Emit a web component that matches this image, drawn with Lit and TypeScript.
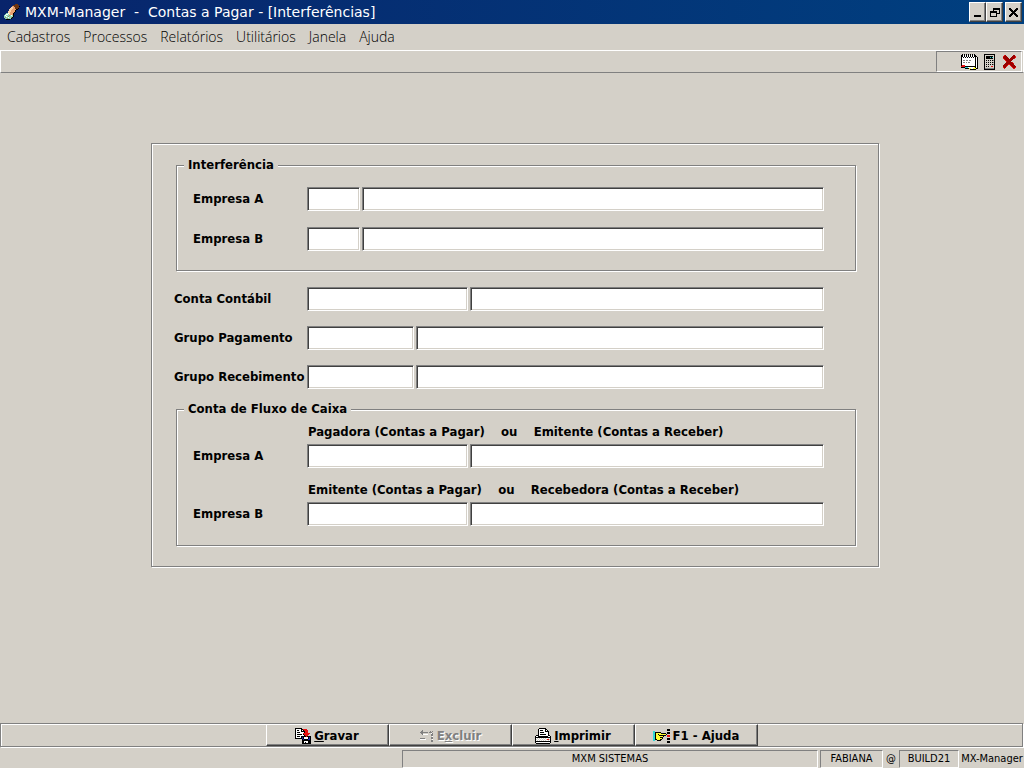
import { LitElement, html, svg, css, nothing } from "lit";
import { customElement, property } from "lit/decorators.js";

const INK: Record<string, string> = {
  k: "#000000", w: "#ffffff", g: "#808080", s: "#d4d0c8", r: "#e81010", d: "#990000",
  y: "#ffff33", c: "#33d6d6", b: "#2020b0", n: "#e8a070", p: "#f8d0a8", m: "#6b3410", t: "#90d8b8", o: "#a09060",
};

const ICONS: Record<string, string[]> = {
  app: [
    "...........mmm..",
    ".........mmmmmm.",
    "........nnmmmmmk",
    ".......ppnnmmmm.",
    "......pppnnmmmk.",
    ".....pppnnnnkk..",
    ".....ppnnnnk....",
    "....pppnnnnk....",
    "....ppnnnnk.....",
    "..ttwpnnnk......",
    ".twwtpnnnk......",
    "twtttotwtk......",
    "ttwtottttk......",
    "tottwttok.......",
    ".ttotttk........",
    "..kkkk..........",
  ],
  notes: [
    ".k.k.k.k.k.k.k...",
    "kkwkwkwkwkwkwkk..",
    "kkwkwkwkwkwkwkkk.",
    "kwkwkwkwkwkwkwkwk",
    "kwwwwwwwwwwwwwkwk",
    "kwwwwwwwwwwwwwkwk",
    "kwggwggwggwwwwkwk",
    "kwwwwwwwwwwwwwkwk",
    "kwggwgwggwwwwwkwk",
    "kwwwwwwwwwwwwwkwk",
    "kwwwwwwwwwwwwwkwk",
    "krrrwwwwwwwwwwkwk",
    "rrrrkkkkkkkkkkkwk",
    "kkkkcccwwwwwwykwk",
    "....kkkkyywwyyykk",
    ".........kkkkkk..",
  ],
  calc: [
    "kkkkkkkkkkk",
    "ksssssssssk",
    "kskkkkkkksk",
    "kskkkkckcsk",
    "kskkkkkkksk",
    "ksssssssssk",
    "kskskskskgk",
    "ksssssssssk",
    "kskskskskgk",
    "ksssssssssk",
    "kskskskskgk",
    "ksssssssssk",
    "kskskssrrsk",
    "ksssssssssk",
    "kgggggggggk",
    "kkkkkkkkkkk",
  ],
  cross: [
    ".rd.......dd.",
    "rddd.....dddr",
    "ddddd...ddddr",
    "rddddd.ddddr.",
    ".rdddddddd...",
    "..rdddddd....",
    "...rdddd.....",
    "...ddddddr...",
    "..ddddddddr..",
    ".ddddrrdddd..",
    "ddddr..rdddd.",
    "dddr....rdddd",
    "rdd......rddr",
    ".r........rr.",
  ],
  save: [
    "kkkkkkk.........",
    "kwwwwwkkrrrr....",
    "kwkkwwkwkrrrr...",
    "kwwwwwkkkkrrr...",
    "kwkkkwwwwkrrr...",
    "kwwwwwwwrrrrrrr.",
    "kwkkkkkwkrrrrr..",
    "kwwwwwwwwkrrr...",
    "kwkkkwkkkkkrkkkk",
    "kwwwwwkbkwwwwkbk",
    "kkkkkkkbkwwwwkbk",
    ".......kbkkkkbbk",
    ".......kkkkkkkkk",
    ".......kkwwwwkkk",
    ".......kkwkwwkkk",
    ".......kkkkkkkkk",
  ],
  remove: [
    "...g...........",
    "..gg.......g.g.",
    ".gggggggg.ggg..",
    "..gg........wg.",
    "...gwwwww...gg.",
    "............gg.",
    ".............w.",
    "............gg.",
    ".ggggg......gg.",
    ".wwwwww......w.",
    "............gg.",
    "............gg.",
  ],
  print: [
    "....kkkkkkk.....",
    "...kwwwwwwkk....",
    "...kwkkkwwkwk...",
    "...kwwwwwwkkkk..",
    "...kwkkkkwwwwk..",
    "...kwwwwwwwwwk..",
    "...kwkkkkkkwwk..",
    ".kkkwwwwwwwwwkk.",
    "kwwkkkkkkkkkkwwk",
    "kkkkkkkkkkkkkkkk",
    "kwswswswswswwswk",
    "kswswswswswsrrsk",
    "kwswswswswswwswk",
    "kkkkkkkkkkkkkkkk",
    "kwwwwwwwwwwwwwwk",
    ".kkkkkkkkkkkkkk.",
  ],
  help: [
    "..............kkk",
    "..............kkk",
    "cc...............",
    "cckkkkkk......kkk",
    "cckyyyyykkkkk.kkk",
    "cckyykyyyyyyyk...",
    "cckyyykkkkkkk.rrr",
    "cckyyyyyyyk...rrr",
    "cckyyyykkk.......",
    "cckyyyyyyk....kkk",
    "cckkyyykk.....kkk",
    "cc..kkkk.........",
    "..............kkk",
    "..............kkk",
  ],
  minimize: [".........", ".........", ".........", ".........", ".........", ".........", ".........", ".kkkkkkk.", ".kkkkkkk."],
  restore: [
    "...kkkkkkk",
    "...kkkkkkk",
    "...k.....k",
    "kkkkkkk..k",
    "kkkkkkk..k",
    "k.....kkkk",
    "k.....k...",
    "k.....k...",
    "kkkkkkk...",
  ],
  close: [
    "kk.....kk",
    "kkk...kkk",
    ".kkk.kkk.",
    "..kkkkk..",
    "...kkk...",
    "..kkkkk..",
    ".kkk.kkk.",
    "kkk...kkk",
    "kk.....kk",
  ],
};

@customElement("pixel-icon")
class PixelIcon extends LitElement {
  @property() name = "";
  static styles = css`
    :host { display: inline-flex; flex: none; }
    svg { display: block; shape-rendering: crispEdges; }
  `;
  render() {
    const rows = ICONS[this.name] ?? [];
    const w = Math.max(...rows.map((r) => r.length));
    const cells = rows.flatMap((row, y) =>
      [...row].map((ch, x) => (ch === "." ? nothing : svg`<rect x=${x} y=${y} width="1" height="1" fill=${INK[ch]}></rect>`)),
    );
    return html`<svg width=${w} height=${rows.length} viewBox="0 0 ${w} ${rows.length}" aria-hidden="true">${cells}</svg>`;
  }
}

@customElement("app-root")
class AppRoot extends LitElement {
  static styles = css`
    :host {
      display: flex;
      flex-direction: column;
      min-height: 100vh;
      box-sizing: border-box;
      background: #d4d0c8;
      color: #000;
      font: 700 13px/16px "DejaVu Sans Condensed", "DejaVu Sans", sans-serif;
    }
    * { box-sizing: border-box; }
    .title {
      display: flex;
      align-items: center;
      height: 24px;
      padding: 0 2px 0 4px;
      gap: 5px;
      background: linear-gradient(90deg, #08246b, #004080);
      color: #fff;
    }
    .title h1 {
      flex: 1;
      margin: 0;
      font: 400 14px/20px "DejaVu Sans", sans-serif;
      white-space: pre;
    }
    .window-buttons { display: flex; }
    .window-buttons button {
      display: flex;
      align-items: center;
      justify-content: center;
      width: 17px;
      height: 20px;
      padding: 0;
      border: 1px solid;
      border-color: #fff #404040 #404040 #fff;
      box-shadow: inset -1px -1px 0 #808080;
      background: #d4d0c8;
    }
    .window-buttons button:last-child { margin-left: 2px; }
    .menu { display: flex; gap: 13px; height: 26px; padding: 0 7px; align-items: center; }
    .menu a { color: #000; text-decoration: none; font: 300 14px/20px "Open Sans", sans-serif; }
    .toolbar {
      display: flex;
      justify-content: flex-end;
      height: 23px;
      padding-right: 1px;
      border: 1px solid;
      border-color: #fff #fff #808080 #fff;
    }
    .tray {
      display: flex;
      align-items: center;
      gap: 6px;
      width: 86px;
      padding: 0 4px 0 24px;
      border: 1px solid;
      border-color: #808080 #fff #fff #808080;
    }
    .tray button { display: flex; padding: 0; border: 0; background: none; }
    .tray button:last-child { margin-left: 2px; }
    main { flex: 1; padding: 70px 145px 70px 151px; }
    .etched { border: 1px solid #808080; box-shadow: 1px 1px 0 #fff, inset 1px 1px 0 #fff; }
    .panel { padding: 14px 0 20px; }
    fieldset { min-width: 0; margin: 0 22px 0 24px; padding: 0 7px 19px; }
    legend { padding: 0 4px; background: #d4d0c8; line-height: 14px; }
    .group { padding: 0 24px 0 9px; display: grid; gap: 16px; }
    .group.companies { padding-top: 15px; }
    .group.flow { padding-top: 6px; gap: 12px; }
    .rows { display: grid; gap: 15px; margin: 16px 54px 13px 22px; }
    .row { display: grid; gap: 2px; align-items: center; }
    .group .row { grid-template-columns: 112px 53px 1fr; }
    .group .row.account { grid-template-columns: 112px 161px 1fr; }
    .rows .row { grid-template-columns: 131px 107px 1fr; }
    .rows .row.account { grid-template-columns: 131px 161px 1fr; }
    .caption { grid-column: 2 / -1; line-height: 20px; white-space: pre; padding-left: 1px; }
    label { white-space: nowrap; }
    input {
      width: 100%;
      min-width: 0;
      height: 24px;
      padding: 0 3px;
      border: 1px solid;
      border-color: #808080 #fff #fff #808080;
      border-radius: 0;
      outline: none;
      background: #fff;
      box-shadow: inset 1px 1px 0 #404040, inset -1px -1px 0 #d4d0c8;
      font: 400 13px/16px "DejaVu Sans Condensed", sans-serif;
    }
    .actions { display: flex; justify-content: center; margin-right: 1px; height: 24px; }
    .actions button {
      display: flex;
      align-items: center;
      justify-content: center;
      gap: 3px;
      width: 123px;
      padding: 1px 0 0;
      border: 1px solid;
      border-color: #fff #404040 #404040 #fff;
      box-shadow: inset -1px -1px 0 #808080;
      background: #d4d0c8;
      color: #000;
      font: 700 13px/18px "DejaVu Sans Condensed", "DejaVu Sans", sans-serif;
    }
    .actions button:disabled { color: #808080; text-shadow: 1px 1px 0 #fff; }
    .status {
      display: grid;
      grid-template-columns: 400px minmax(0, 1fr) 63px 12px 60px 62px;
      column-gap: 2px;
      height: 21px;
      padding: 3px 1px 0 0;
      font: 400 11px/16px "DejaVu Sans Condensed", "DejaVu Sans", sans-serif;
      text-align: center;
      white-space: nowrap;
    }
    .sunken { border: 1px solid; border-color: #808080 #fff #fff #808080; }
    .plain { padding-top: 1px; }
  `;

  row(id: string, text: string, account = false, caption = "") {
    return html`<div class="row ${account ? "account" : ""}">
      ${caption ? html`<div class="caption">${caption}</div>` : nothing}
      <label for=${id}>${text}</label>
      <input id=${id} type="text" />
      <input type="text" aria-label="${text} - nome" readonly />
    </div>`;
  }

  render() {
    const menu = ["Cadastros", "Processos", "Relatórios", "Utilitários", "Janela", "Ajuda"];
    return html`
      <header>
        <div class="title">
          <pixel-icon name="app"></pixel-icon>
          <h1>MXM-Manager  -  Contas a Pagar - [Interferências]</h1>
          <div class="window-buttons">
            <button aria-label="Minimizar"><pixel-icon name="minimize"></pixel-icon></button>
            <button aria-label="Restaurar"><pixel-icon name="restore"></pixel-icon></button>
            <button aria-label="Fechar"><pixel-icon name="close"></pixel-icon></button>
          </div>
        </div>
        <nav class="menu">${menu.map((m) => html`<a href="#">${m}</a>`)}</nav>
        <div class="toolbar">
          <div class="tray">
            <button aria-label="Agenda"><pixel-icon name="notes"></pixel-icon></button>
            <button aria-label="Calculadora"><pixel-icon name="calc"></pixel-icon></button>
            <button aria-label="Sair"><pixel-icon name="cross"></pixel-icon></button>
          </div>
        </div>
      </header>
      <main>
        <form class="panel etched">
          <fieldset class="etched">
            <legend>Interferência</legend>
            <div class="group companies">${this.row("empresa-a", "Empresa A")} ${this.row("empresa-b", "Empresa B")}</div>
          </fieldset>
          <div class="rows">
            ${this.row("conta", "Conta Contábil", true)}
            ${this.row("pagamento", "Grupo Pagamento")}
            ${this.row("recebimento", "Grupo Recebimento")}
          </div>
          <fieldset class="etched">
            <legend>Conta de Fluxo de Caixa</legend>
            <div class="group flow">
              ${this.row("fluxo-a", "Empresa A", true, "Pagadora (Contas a Pagar)    ou    Emitente (Contas a Receber)")}
              ${this.row("fluxo-b", "Empresa B", true, "Emitente (Contas a Pagar)    ou    Recebedora (Contas a Receber)")}
            </div>
          </fieldset>
        </form>
      </main>
      <footer>
        <div class="actions etched">
          <button><pixel-icon name="save"></pixel-icon><span><u>G</u>ravar</span></button>
          <button disabled><pixel-icon name="remove"></pixel-icon><span>E<u>x</u>cluir</span></button>
          <button><pixel-icon name="print"></pixel-icon><span><u>I</u>mprimir</span></button>
          <button><pixel-icon name="help"></pixel-icon><span>F1 - Ajuda</span></button>
        </div>
        <div class="status">
          <span></span>
          <span class="sunken">MXM SISTEMAS</span>
          <span class="sunken">FABIANA</span>
          <span class="plain">@</span>
          <span class="sunken">BUILD21</span>
          <span class="plain">MX-Manager</span>
        </div>
      </footer>
    `;
  }
}
